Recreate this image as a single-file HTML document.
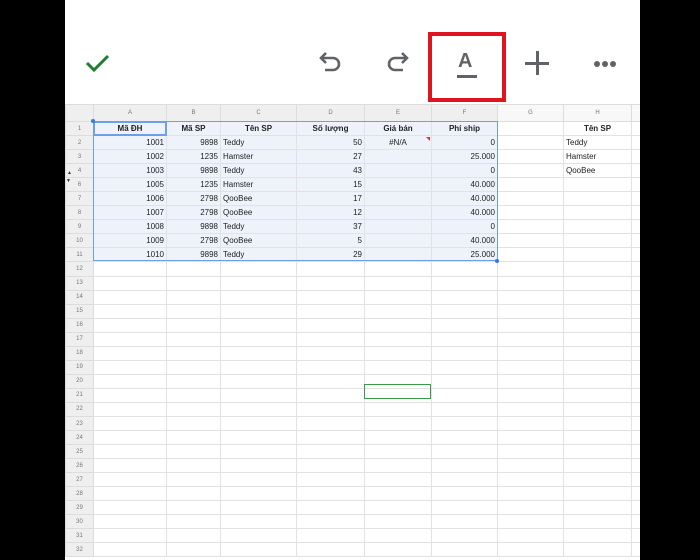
<!DOCTYPE html><html><head><meta charset="utf-8"><style>
*{margin:0;padding:0;box-sizing:border-box}
body{width:700px;height:560px;background:#000;position:relative;overflow:hidden;font-family:"Liberation Sans",sans-serif}
#w{position:absolute;left:65px;top:0;width:575px;height:560px;background:#fff;overflow:hidden}
table{position:absolute;left:0;top:104px;width:586px;border-collapse:collapse;table-layout:fixed;font-size:8px;color:#222}
td{border:1px solid #e2e2e2;height:14.05px;padding:0 2px;white-space:nowrap;overflow:hidden}
tr.h td{height:17px;background:#efefef;color:#777;text-align:center;font-size:6px;border-color:#ddd}
td.r{background:#efefef;color:#777;text-align:center;font-size:6px;border-color:#ddd}
tr.h td.g{background:#f8f8f8}
.n{text-align:right}.b{font-weight:bold;text-align:center}
.s{background:#eef3fb}
</style></head><body><div id="w">
<svg style="position:absolute;left:18px;top:50px" width="30" height="26"><path d="M4 13 L11 20 L25 6" stroke="#1e7e34" stroke-width="3" fill="none"/></svg>
<svg style="position:absolute;left:252px;top:50px" width="28" height="26" fill="none" stroke="#5f6368" stroke-width="2.6"><path d="M4 8 H16 A6 6 0 0 1 16 20 H8"/><path d="M9 3 L4 8 L9 13"/></svg>
<svg style="position:absolute;left:320px;top:50px" width="28" height="26" fill="none" stroke="#5f6368" stroke-width="2.6"><path d="M22 8 H10 A6 6 0 0 0 10 20 H18"/><path d="M17 3 L22 8 L17 13"/></svg>
<div style="position:absolute;left:393px;top:50px;font-size:20px;font-weight:bold;color:#5f6368">A</div>
<div style="position:absolute;left:392px;top:75px;width:20px;height:2.5px;background:#5f6368"></div>
<div style="position:absolute;left:363px;top:32px;width:78px;height:70px;border:4px solid #e0141e"></div>
<div style="position:absolute;left:460px;top:62px;width:24px;height:3px;background:#5f6368"></div>
<div style="position:absolute;left:471px;top:51px;width:3px;height:24px;background:#5f6368"></div>
<svg style="position:absolute;left:528px;top:59px" width="26" height="10" fill="#5f6368"><circle cx="4" cy="5" r="3"/><circle cx="12" cy="5" r="3"/><circle cx="20" cy="5" r="3"/></svg>
<table>
<colgroup><col style="width:28px"><col style="width:73px"><col style="width:54px"><col style="width:76px"><col style="width:68px"><col style="width:67px"><col style="width:66px"><col style="width:66px"><col style="width:68px"><col style="width:20px"></colgroup>
<tr class="h"><td></td><td>A</td><td>B</td><td>C</td><td>D</td><td>E</td><td>F</td><td class="g">G</td><td class="g">H</td><td class="g"></td></tr>
<tr><td class="r">1</td><td class="b s">Mã ĐH</td><td class="b s">Mã SP</td><td class="b s">Tên SP</td><td class="b s">Số lượng</td><td class="b s">Giá bán</td><td class="b s">Phí ship</td><td></td><td class="b">Tên SP</td><td></td></tr>
<tr><td class="r">2</td><td class="n s">1001</td><td class="n s">9898</td><td class="s">Teddy</td><td class="n s">50</td><td class="s" style="text-align:center">#N/A</td><td class="n s">0</td><td></td><td>Teddy</td><td></td></tr>
<tr><td class="r">3</td><td class="n s">1002</td><td class="n s">1235</td><td class="s">Hamster</td><td class="n s">27</td><td class="s"></td><td class="n s">25.000</td><td></td><td>Hamster</td><td></td></tr>
<tr><td class="r">4</td><td class="n s">1003</td><td class="n s">9898</td><td class="s">Teddy</td><td class="n s">43</td><td class="s"></td><td class="n s">0</td><td></td><td>QooBee</td><td></td></tr>
<tr><td class="r">6</td><td class="n s">1005</td><td class="n s">1235</td><td class="s">Hamster</td><td class="n s">15</td><td class="s"></td><td class="n s">40.000</td><td></td><td></td><td></td></tr>
<tr><td class="r">7</td><td class="n s">1006</td><td class="n s">2798</td><td class="s">QooBee</td><td class="n s">17</td><td class="s"></td><td class="n s">40.000</td><td></td><td></td><td></td></tr>
<tr><td class="r">8</td><td class="n s">1007</td><td class="n s">2798</td><td class="s">QooBee</td><td class="n s">12</td><td class="s"></td><td class="n s">40.000</td><td></td><td></td><td></td></tr>
<tr><td class="r">9</td><td class="n s">1008</td><td class="n s">9898</td><td class="s">Teddy</td><td class="n s">37</td><td class="s"></td><td class="n s">0</td><td></td><td></td><td></td></tr>
<tr><td class="r">10</td><td class="n s">1009</td><td class="n s">2798</td><td class="s">QooBee</td><td class="n s">5</td><td class="s"></td><td class="n s">40.000</td><td></td><td></td><td></td></tr>
<tr><td class="r">11</td><td class="n s">1010</td><td class="n s">9898</td><td class="s">Teddy</td><td class="n s">29</td><td class="s"></td><td class="n s">25.000</td><td></td><td></td><td></td></tr>
<tr><td class="r">12</td><td></td><td></td><td></td><td></td><td></td><td></td><td></td><td></td><td></td></tr>
<tr><td class="r">13</td><td></td><td></td><td></td><td></td><td></td><td></td><td></td><td></td><td></td></tr>
<tr><td class="r">14</td><td></td><td></td><td></td><td></td><td></td><td></td><td></td><td></td><td></td></tr>
<tr><td class="r">15</td><td></td><td></td><td></td><td></td><td></td><td></td><td></td><td></td><td></td></tr>
<tr><td class="r">16</td><td></td><td></td><td></td><td></td><td></td><td></td><td></td><td></td><td></td></tr>
<tr><td class="r">17</td><td></td><td></td><td></td><td></td><td></td><td></td><td></td><td></td><td></td></tr>
<tr><td class="r">18</td><td></td><td></td><td></td><td></td><td></td><td></td><td></td><td></td><td></td></tr>
<tr><td class="r">19</td><td></td><td></td><td></td><td></td><td></td><td></td><td></td><td></td><td></td></tr>
<tr><td class="r">20</td><td></td><td></td><td></td><td></td><td></td><td></td><td></td><td></td><td></td></tr>
<tr><td class="r">21</td><td></td><td></td><td></td><td></td><td></td><td></td><td></td><td></td><td></td></tr>
<tr><td class="r">22</td><td></td><td></td><td></td><td></td><td></td><td></td><td></td><td></td><td></td></tr>
<tr><td class="r">23</td><td></td><td></td><td></td><td></td><td></td><td></td><td></td><td></td><td></td></tr>
<tr><td class="r">24</td><td></td><td></td><td></td><td></td><td></td><td></td><td></td><td></td><td></td></tr>
<tr><td class="r">25</td><td></td><td></td><td></td><td></td><td></td><td></td><td></td><td></td><td></td></tr>
<tr><td class="r">26</td><td></td><td></td><td></td><td></td><td></td><td></td><td></td><td></td><td></td></tr>
<tr><td class="r">27</td><td></td><td></td><td></td><td></td><td></td><td></td><td></td><td></td><td></td></tr>
<tr><td class="r">28</td><td></td><td></td><td></td><td></td><td></td><td></td><td></td><td></td><td></td></tr>
<tr><td class="r">29</td><td></td><td></td><td></td><td></td><td></td><td></td><td></td><td></td><td></td></tr>
<tr><td class="r">30</td><td></td><td></td><td></td><td></td><td></td><td></td><td></td><td></td><td></td></tr>
<tr><td class="r">31</td><td></td><td></td><td></td><td></td><td></td><td></td><td></td><td></td><td></td></tr>
<tr><td class="r">32</td><td></td><td></td><td></td><td></td><td></td><td></td><td></td><td></td><td></td></tr>
</table>
<div style="position:absolute;left:28px;top:121px;width:405px;height:140px;border:1px solid #6d9eeb"></div>
<div style="position:absolute;left:28px;top:121px;width:74px;height:15px;border:2px solid #6d9eeb"></div>
<div style="position:absolute;left:26px;top:119px;width:4px;height:4px;background:#3b78e7;border-radius:2px"></div>
<div style="position:absolute;left:430px;top:259px;width:4px;height:4px;background:#3b78e7;border-radius:2px"></div>
<div style="position:absolute;left:361px;top:137px;width:0;height:0;border-top:4px solid #d33;border-left:4px solid transparent"></div>
<div style="position:absolute;left:299px;top:384px;width:67px;height:15px;border:1px solid #3a9a4a"></div>
</div>
<div style="position:absolute;left:67px;top:170px;font-size:5px;color:#333">▲</div>
<div style="position:absolute;left:66px;top:178px;font-size:5px;color:#333">▼</div>
</body></html>
